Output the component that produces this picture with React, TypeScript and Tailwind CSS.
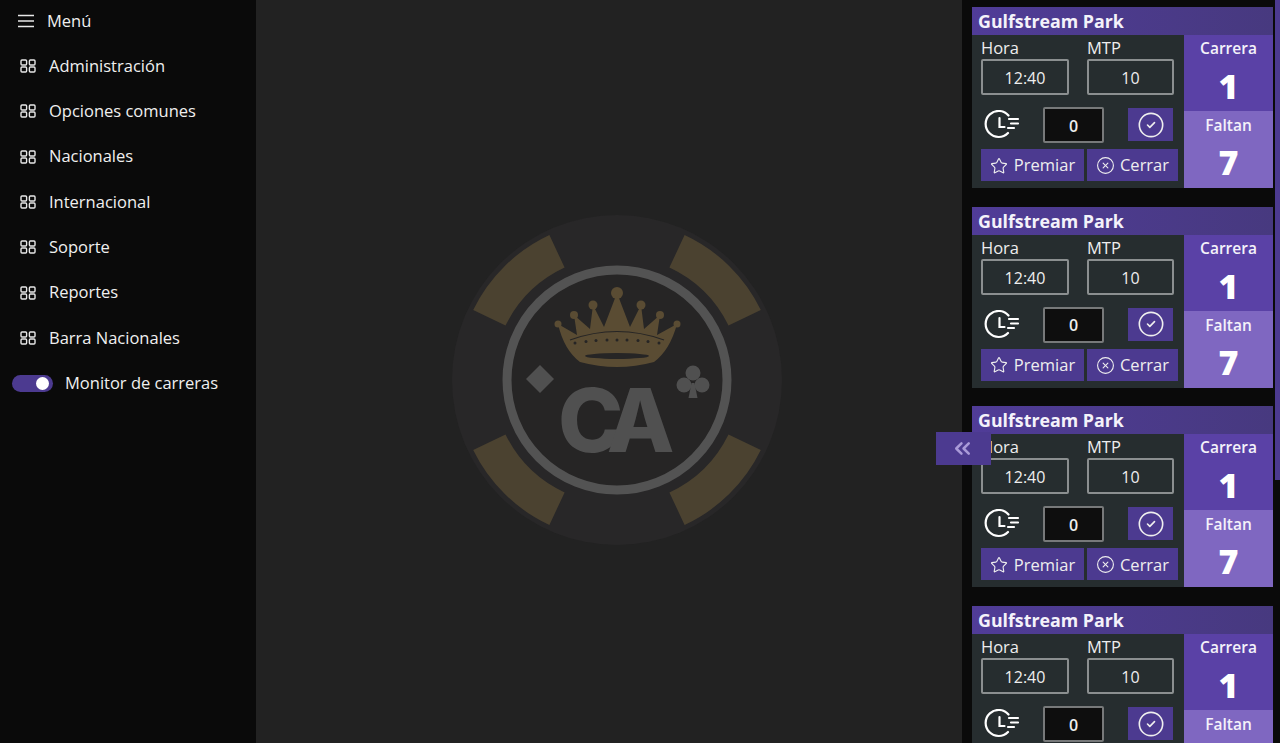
import { ChevronsLeft, CircleCheck, CircleX, Star } from 'lucide-react'

const menuItems = ['Administración', 'Opciones comunes', 'Nacionales', 'Internacional', 'Soporte', 'Reportes', 'Barra Nacionales']

function ClockLines() {
  return (
    <svg width="36" height="30" viewBox="0 0 36 30" fill="none" stroke="#fff" strokeWidth="2.2" strokeLinecap="round">
      <path d="M24.500 5.500A13 13 0 1 0 24 23" />
      <path d="M15.500 8v9h5" />
      <path d="M25 9h9M27 13.500h7M24 18h6" />
    </svg>
  )
}

function GridIcon() {
  return (
    <svg width="16" height="14" viewBox="0 0 16 14" fill="none" stroke="#e8e8e8" strokeWidth="1.4">
      <rect x="1" y="1" width="5.6" height="5" rx="1" />
      <rect x="9.4" y="1" width="5.6" height="5" rx="1" />
      <rect x="1" y="8" width="5.6" height="5" rx="1" />
      <rect x="9.4" y="8" width="5.6" height="5" rx="1" />
    </svg>
  )
}

function MenuIcon() {
  return (
    <svg width="16" height="14" viewBox="0 0 16 14" fill="none" stroke="#e8e8e8" strokeWidth="1.4">
      <path d="M0 1.500h16M0 7h16M0 12.500h16" />
    </svg>
  )
}

// gold wedge of the chip, angles measured from the top
function wedge(a1: number, a2: number) {
  const pt = (r: number, a: number) => {
    const t = (a * Math.PI) / 180
    return `${(165 + r * Math.sin(t)).toFixed(1)} ${(165 - r * Math.cos(t)).toFixed(1)}`
  }
  return `M${pt(160, a1)}A160 160 0 0 1 ${pt(160, a2)}L${pt(124, a2)}A124 124 0 0 0 ${pt(124, a1)}Z`
}

function ChipLogo() {
  return (
    <svg width="330" height="330" viewBox="0 0 330 330">
      <circle cx="165" cy="165" r="165" fill="#282728" />
      {[25, 116, 205, 296].map((a) => (
        <path key={a} d={wedge(a, a + 39)} fill="#4b4230" />
      ))}
      <circle cx="165" cy="165" r="110" fill="#262525" stroke="#535353" strokeWidth="9" />
      <g fill="#5a4c33">
        <path d="M106 109Q112 135 128 147Q165 157 202 147Q218 135 225 109L205 120L208 100L192 114L189 90L178 112L165 78L152 112L141 90L138 114L122 100L125 120Z" />
        <circle cx="165" cy="78" r="6" />
        <circle cx="141" cy="90" r="4.5" />
        <circle cx="189" cy="90" r="4.5" />
        <circle cx="122" cy="100" r="4" />
        <circle cx="208" cy="100" r="4" />
        <circle cx="106" cy="109" r="3.5" />
        <circle cx="225" cy="109" r="3.5" />
      </g>
      <path d="M118 125Q165 108 212 125" fill="none" stroke="#262525" strokeWidth="1.2" />
      <g fill="#262525">
        <ellipse cx="165" cy="141" rx="32" ry="3" />
        {[123, 134, 144, 155, 165, 175, 186, 196, 207].map((x, i) => (
          <circle key={x} cx={x} cy={128 - [0, 1.5, 2.5, 3, 3, 3, 2.5, 1.5, 0][i]} r="1.5" />
        ))}
      </g>
      <path d="M88 150L102 164L88 178L74 164Z" fill="#505050" />
      <g fill="#505050">
        <circle cx="241" cy="158" r="7.5" />
        <circle cx="232" cy="170" r="7.5" />
        <circle cx="250" cy="170" r="7.5" />
        <path d="M239.500 168h3l3 15h-9z" />
      </g>
      <text x="106" y="237" fontFamily="Inter, sans-serif" fontWeight="800" fontSize="88" letterSpacing="-14" fill="#505050">
        CA
      </text>
    </svg>
  )
}

function RaceCard({ cut = false }: { cut?: boolean }) {
  return (
    <div className="w-[301px] shrink-0">
      <div className="h-[28px] bg-linear-to-r from-[#503c98] to-[#47397f] pl-[6px] text-[17.800px] leading-[28px] font-bold text-[#f4f2fa]">Gulfstream Park</div>
      <div className="flex h-[153px]">
        <div className="w-[212px] bg-[#262d2f] pl-[9px] pt-[3px] font-medium text-[#eeeeee]">
          <div className="flex gap-[18px]">
            <div className="w-[88px]">
              <div className="text-[16.500px] leading-[20px]">Hora</div>
              <div className="mt-[1px] flex h-[36px] items-center justify-center rounded-[2px] border-2 border-[#8b8f90] pt-[2px] text-[16px]">12:40</div>
            </div>
            <div className="w-[87px]">
              <div className="text-[16.500px] leading-[20px]">MTP</div>
              <div className="mt-[1px] flex h-[36px] items-center justify-center rounded-[2px] border-2 border-[#8b8f90] pt-[2px] text-[16px]">10</div>
            </div>
          </div>
          <div className="mt-[12px] flex h-[36px] items-center pl-[3px]">
            <ClockLines />
            <div className="ml-[23px] flex h-[36px] w-[61px] items-center justify-center rounded-[2px] border-2 border-[#77797a] bg-[#0e0e0e] pt-[1px] text-[16px] font-semibold">0</div>
            <div className="ml-[24px] mt-[1px] flex h-[33px] w-[45px] items-center justify-center self-start bg-[#4c3a90]">
              <CircleCheck size={28} strokeWidth={1.4} />
            </div>
          </div>
          {!cut && (
            <div className="mt-[6px] flex gap-[3px] text-[16.500px]">
              <div className="flex h-[32px] w-[103px] items-center justify-center gap-[6px] bg-[#4c3a90] pt-[1px]">
                <Star size={18} strokeWidth={1.5} />
                Premiar
              </div>
              <div className="flex h-[32px] w-[91px] items-center justify-center gap-[5px] bg-[#4c3a90] pt-[1px]">
                <CircleX size={19} strokeWidth={1.4} />
                Cerrar
              </div>
            </div>
          )}
        </div>
        <div className="flex w-[89px] flex-col text-center text-[#f4f2fa]">
          <div className="h-[76px] bg-[#5a41a6] pt-[3px]">
            <div className="text-[15.500px] leading-[20px] font-semibold">Carrera</div>
            <div className="mt-[5px] text-[34px] leading-[46px] font-extrabold text-white">1</div>
          </div>
          <div className="h-[77px] bg-[#7f67c1] pt-[4px]">
            <div className="text-[15.500px] leading-[20px] font-semibold">Faltan</div>
            {!cut && <div className="mt-[4px] text-[34px] leading-[46px] font-extrabold text-white">7</div>}
          </div>
        </div>
      </div>
    </div>
  )
}

export default function App() {
  return (
    <div className="relative flex h-[743px] w-[1280px] overflow-hidden bg-[#222222] font-['Open_Sans','Noto_Sans',sans-serif] text-white">
      {/* Sidebar */}
      <nav className="w-[256px] shrink-0 bg-[#0a0a0a] pt-[9px] text-[16.500px] font-medium text-[#f0f0f0]">
        <div className="flex h-[24px] items-center pl-[18px]">
          <MenuIcon />
          <span className="ml-[13px]">Menú</span>
        </div>
        <div className="mt-[10px]">
          {menuItems.map((item) => (
            <div key={item} className="flex h-[45.3px] items-center pl-[20px] pt-[1px]">
              <GridIcon />
              <span className="ml-[13px]">{item}</span>
            </div>
          ))}
          <div className="flex h-[45.3px] items-center pl-[12px] pt-[1px]">
            <div className="flex h-[17px] w-[41px] items-center justify-end rounded-full bg-[#4c3a90] pr-[4px]">
              <div className="h-[13px] w-[13px] rounded-full bg-white" />
            </div>
            <span className="ml-[12px]">Monitor de carreras</span>
          </div>
        </div>
      </nav>

      {/* Logo */}
      <main className="flex flex-1 items-center justify-center pl-[16px] pt-[17px]">
        <ChipLogo />
      </main>

      {/* Race cards */}
      <aside className="flex h-[743px] w-[318px] shrink-0 bg-[#0a0a0a]">
        <div className="flex flex-1 flex-col gap-[18.7px] overflow-hidden pl-[10px] pt-[7px]">
          <RaceCard />
          <RaceCard />
          <RaceCard />
          <RaceCard cut />
        </div>
        <div className="w-[5px] shrink-0">
          <div className="h-[480px] bg-[#4c3a90]" />
        </div>
      </aside>

      {/* Collapse button */}
      <div className="absolute left-[936px] top-[432px] flex h-[33px] w-[55px] items-center justify-center bg-[#4c3a90] pr-[3px]">
        <ChevronsLeft size={25} strokeWidth={2.4} className="text-[#a99ad8]" />
      </div>
    </div>
  )
}
